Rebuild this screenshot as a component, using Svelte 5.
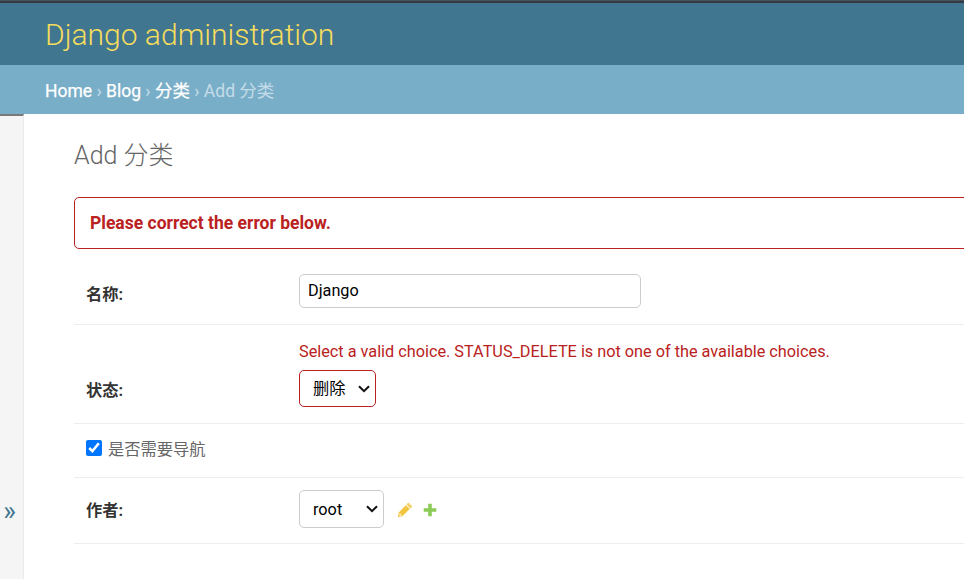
<script>
  let name = $state('Django');
  let navigation = $state(true);
</script>

{#snippet chevron()}
  <svg class="chevron" width="12" height="8" viewBox="0 0 12 8" aria-hidden="true">
    <path d="M1 1.2 6 6.2 11 1.2" fill="none" stroke="#111" stroke-width="2" />
  </svg>
{/snippet}

<div class="page">
  <header><h1>Django administration</h1></header>
  <nav class="crumbs"><a href="#home">Home</a> › <a href="#blog">Blog</a> › <a href="#category">分类</a> › Add 分类</nav>
  <div class="main">
    <aside><button class="toggle" aria-label="Toggle navigation">»</button></aside>
    <main>
      <h2>Add 分类</h2>
      <p class="note">Please correct the error below.</p>
      <form>
        <div class="row name">
          <label for="name">名称:</label>
          <input id="name" class="text" bind:value={name} />
        </div>
        <div class="row status">
          <p class="error">Select a valid choice. STATUS_DELETE is not one of the available choices.</p>
          <div class="line">
            <label for="status">状态:</label>
            <span class="picker invalid">
              <select id="status"><option>删除</option></select>
              {@render chevron()}
            </span>
          </div>
        </div>
        <div class="row nav">
          <input id="nav" type="checkbox" bind:checked={navigation} />
          <label for="nav">是否需要导航</label>
        </div>
        <div class="row owner">
          <label for="owner">作者:</label>
          <span class="picker">
            <select id="owner"><option>root</option></select>
            {@render chevron()}
          </span>
          <svg class="pencil" width="16" height="16" viewBox="0 0 16 16" aria-hidden="true">
            <path d="M10.4 1.3 11.6.7 15.2 4.3 14.6 5.5 13.3 6.5 9.5 2.7z" fill="#f5d16c" />
            <path d="M8.8 3.2 12.7 7.1 5.4 14.2 1 15.1 1.7 10.5z" fill="#f2c849" />
            <path d="M3.2 10.7 9.7 4.5M5.1 12.5 11.6 6" stroke="#efb80b" stroke-width="1" opacity=".4" />
            <path d="M2.6 11 5 13.4 2.4 14z" fill="#fff3cc" />
            <path d="M1.3 13.2 2.9 14.7 1 15.1z" fill="#efbf35" />
          </svg>
          <svg class="plus" width="14" height="14" viewBox="0 0 14 14" aria-hidden="true">
            <path d="M5.2.7h3.6v4.5h4.5v3.6H8.8v4.5H5.2V8.8H.7V5.2h4.5z" fill="#8bcc57" />
          </svg>
        </div>
      </form>
    </main>
  </div>
</div>

<style>
  .page, .page * { box-sizing: border-box; }
  .page {
    display: flex;
    flex-direction: column;
    width: 100%;
    height: 579px;
    overflow: hidden;
    background: #fff;
    color: #666;
    font: 16.25px/20px Roboto, "Noto Sans CJK SC", sans-serif;
  }
  h1, h2, p { margin: 0; }
  header {
    flex: none;
    height: 65px;
    padding: 16px 45px 0;
    border-top: 1px solid #43545e;
    background: linear-gradient(#353b40 2px, #417690 2px);
  }
  h1 { color: #f5dd5d; font-size: 30px; font-weight: 300; line-height: 36px; }
  .crumbs {
    flex: none;
    height: 49px;
    padding: 14px 45px 10px;
    background: #79aec8;
    color: #c4dce8;
    font-size: 17.5px;
    line-height: 25px;
    white-space: nowrap;
  }
  .crumbs a { color: #fff; text-decoration: none; -webkit-text-stroke: .25px #fff; }
  .main { display: flex; flex: 1; min-height: 0; }
  aside {
    display: flex;
    flex: none;
    flex-direction: column;
    justify-content: flex-end;
    width: 24px;
    padding-bottom: 52px;
    border-top: 2px solid #797979;
    border-right: 1px solid #eaeaea;
    background: #f5f5f5;
  }
  .toggle {
    height: 30px;
    padding: 0 4px 2px 0;
    border: 0;
    background: none;
    color: #417690;
    font: 27px/28px Roboto, sans-serif;
  }
  main { flex: 1; min-width: 0; padding: 25px 0 0 50px; }
  h2 { height: 58px; font-size: 25px; font-weight: 300; line-height: 34px; }
  .note {
    height: 52px;
    margin-right: -10px;
    padding: 15px;
    border: 1px solid #ba2121;
    border-radius: 5px;
    color: #ba2121;
    font-size: 17.5px;
    font-weight: 700;
  }
  .row { display: flex; padding: 0 12px; border-bottom: 1px solid #eee; }
  .row label { flex: none; width: 213px; color: #333; font-weight: 700; }
  .name { height: 76px; padding-top: 25px; }
  .name label { padding-top: 11px; }
  .text {
    width: 342px;
    height: 34px;
    padding: 0 8px 2px;
    border: 1px solid #ccc;
    border-radius: 5px;
    color: #000;
    font: inherit;
  }
  .status { flex-direction: column; height: 99px; padding-top: 17px; }
  .error { padding-left: 213px; color: #ba2121; white-space: nowrap; }
  .line { display: flex; margin-top: 8px; }
  .line label { padding-top: 11px; }
  .picker { display: grid; flex: none; width: 85px; height: 38px; }
  .picker.invalid { width: 77px; height: 37px; }
  .picker select {
    grid-area: 1 / 1;
    width: 100%;
    height: 100%;
    padding: 2px 0 0 13px;
    appearance: none;
    border: 1px solid #ccc;
    border-radius: 5px;
    background: #fff;
    color: #000;
    font: inherit;
  }
  .picker.invalid select { padding-top: 0; border-color: #ba2121; }
  .chevron {
    grid-area: 1 / 1;
    place-self: center end;
    margin-right: 6px;
    pointer-events: none;
  }
  .nav { height: 54px; padding-top: 16px; }
  .nav input { flex: none; width: 16px; height: 16px; margin: 0 6px 0 0; }
  .nav label { width: auto; color: #666; font-weight: 400; }
  .owner { height: 66px; padding-top: 12px; }
  .owner label { padding-top: 11px; }
  .pencil { margin: 12px 0 0 13px; }
  .plus { margin: 13px 0 0 10px; }
</style>
